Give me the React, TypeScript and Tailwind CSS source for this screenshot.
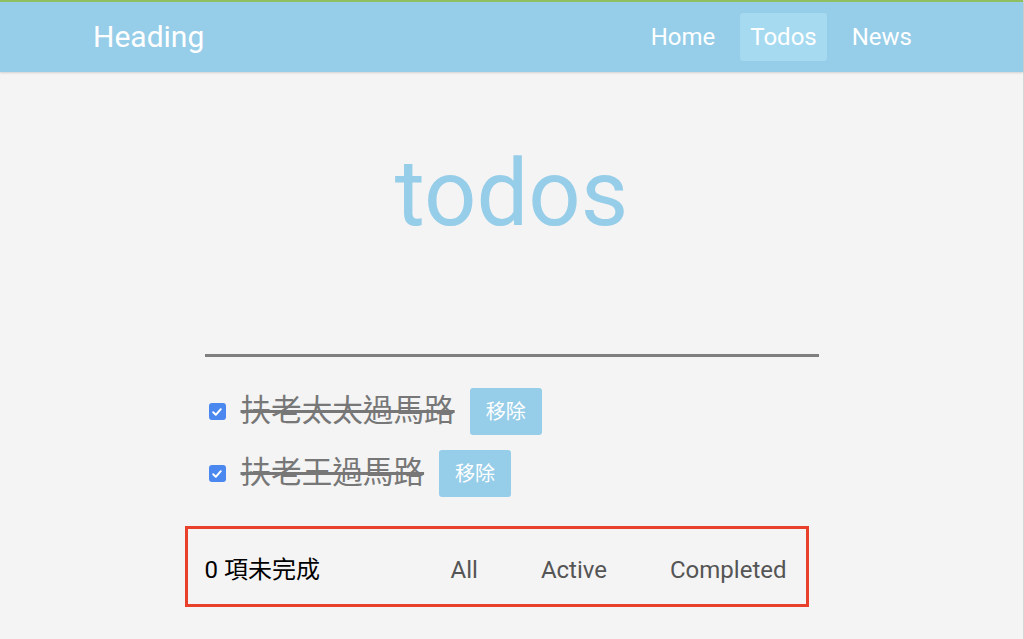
import React, { useState } from 'react';

type Todo = { id: number; text: string; done: boolean };

const initialTodos: Todo[] = [
  { id: 1, text: '扶老太太過馬路', done: true },
  { id: 2, text: '扶老王過馬路', done: true },
];

const font = "font-['Roboto','Noto_Sans_CJK_TC',sans-serif]";

function Check({ checked, onClick }: { checked: boolean; onClick: () => void }) {
  return (
    <button
      onClick={onClick}
      className={`ml-[4px] w-[17px] h-[17px] rounded-[3px] flex items-center justify-center shrink-0 ${
        checked ? 'bg-[#4a87ee]' : 'bg-white border border-[#767676]'
      }`}
    >
      {checked && (
        <svg width="12" height="12" viewBox="0 0 12 12">
          <path d="M2.2 6.3 L4.8 8.8 L9.8 3.2" fill="none" stroke="white" strokeWidth="2" strokeLinecap="round" strokeLinejoin="round" />
        </svg>
      )}
    </button>
  );
}

export default function App() {
  const [todos, setTodos] = useState(initialTodos);
  const [filter, setFilter] = useState('All');
  const left = todos.filter((t) => !t.done).length;

  return (
    <div className={`min-h-[639px] bg-[#f4f4f4] border-r border-[#d6d6d6] ${font}`}>
      <nav className="h-[72px] border-t-2 border-[#8fbf5e] bg-[#96cde8] shadow-[0_1px_2px_rgba(0,0,0,0.15)] flex items-center justify-between pl-[93px] pr-[101px]">
        <div className="text-white text-[30px] leading-none">Heading</div>
        <div className="flex items-center gap-[15px]">
          {['Home', 'Todos', 'News'].map((item) => (
            <a
              key={item}
              className={`h-[48px] px-[10px] flex items-center text-white text-[24px] rounded-[3px] ${
                item === 'Todos' ? 'bg-[#ade0f3]/70' : ''
              }`}
            >
              {item}
            </a>
          ))}
        </div>
      </nav>

      <main className="w-[614px] mx-auto">
        <h1 className="mt-[76px] text-center text-[92px] leading-none text-[#96cde8]">todos</h1>
        <div className="mt-[114px] h-[3px] bg-[#7f7f7f]" />

        <ul className="mt-[31px] flex flex-col gap-[15px]">
          {todos
            .filter((t) => filter === 'All' || (filter === 'Active' ? !t.done : t.done))
            .map((t) => (
              <li key={t.id} className="h-[47px] flex items-center">
                <Check
                  checked={t.done}
                  onClick={() => setTodos(todos.map((x) => (x.id === t.id ? { ...x, done: !x.done } : x)))}
                />
                <span className={`ml-[15px] text-[30.6px] leading-none text-[#777] ${t.done ? 'line-through' : ''}`}>
                  {t.text}
                </span>
                <button
                  onClick={() => setTodos(todos.filter((x) => x.id !== t.id))}
                  className="ml-[15px] h-[47px] px-[16px] rounded-[3px] bg-[#96cde8] text-white text-[20px]"
                >
                  移除
                </button>
              </li>
            ))}
        </ul>

        <div className="mt-[29px] -ml-[20px] w-[624px] h-[81px] border-[3px] border-[#e8402a] flex items-center pl-[17px] pr-[19px] pt-[6px]">
          <span className="text-[24px] text-black">{left} 項未完成</span>
          <div className="ml-auto flex items-center gap-[63px]">
            {['All', 'Active', 'Completed'].map((f) => (
              <button key={f} onClick={() => setFilter(f)} className="text-[24px] text-[#555]">
                {f}
              </button>
            ))}
          </div>
        </div>
      </main>
    </div>
  );
}
